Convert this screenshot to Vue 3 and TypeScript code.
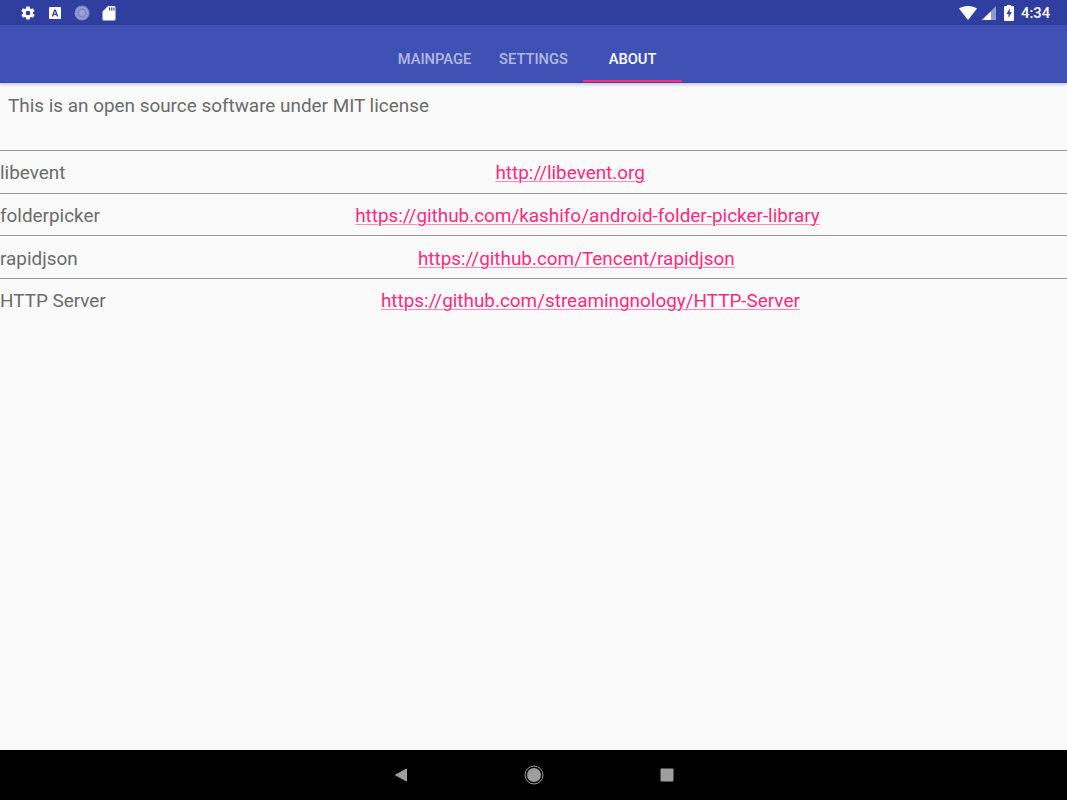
<template>
  <div class="screen">
    <div class="status-bar">
      <div class="status-left">
        <svg width="16" height="16" viewBox="0 0 24 24"><path fill="#fff" d="M19.4 13c.1-.3.1-.7.1-1s0-.7-.1-1l2.100-1.600c.2-.2.2-.4.1-.6l-2-3.500c-.1-.2-.4-.3-.6-.2l-2.500 1c-.5-.4-1.100-.7-1.700-1l-.4-2.600c0-.2-.2-.4-.5-.4h-4c-.2 0-.5.2-.5.400l-.4 2.600c-.6.300-1.200.6-1.700 1l-2.500-1c-.2-.1-.5 0-.6.200l-2 3.500c-.1.200-.1.500.1.600L4.500 11c0 .3-.1.700-.1 1s0 .7.1 1l-2.100 1.600c-.2.200-.2.400-.1.600l2 3.500c.1.200.4.300.6.200l2.500-1c.5.400 1.100.7 1.700 1l.4 2.600c0 .2.300.4.500.4h4c.3 0 .5-.2.500-.4l.4-2.600c.6-.3 1.200-.6 1.700-1l2.500 1c.2.100.5 0 .6-.2l2-3.500c.1-.2.100-.4-.1-.6zM12 15.500a3.500 3.500 0 1 1 0-7 3.500 3.500 0 0 1 0 7z"/></svg>
        <svg width="14" height="14" viewBox="0 0 14 14"><path fill="#fff" d="M2 1h10a1 1 0 0 1 1 1v10a1 1 0 0 1-1 1H2a1 1 0 0 1-1-1V2a1 1 0 0 1 1-1z"/><path fill="#303f9f" d="M6.200 3.500h1.600L10.300 10.500H8.800l-.5-1.500H5.700l-.5 1.500H3.700zM6.100 7.800h1.800L7 5.200z"/></svg>
        <svg width="16" height="16" viewBox="0 0 16 16"><circle cx="8" cy="8" r="7.500" fill="#7f8aca"/><circle cx="8" cy="8" r="5.500" fill="none" stroke="#a9b1dd" stroke-width="1.500" stroke-dasharray="1 1"/><circle cx="8" cy="8" r="3" fill="#99a2d6"/></svg>
        <svg width="14" height="16" viewBox="0 0 14 16"><path fill="#fff" d="M6 1h6a1.500 1.500 0 0 1 1.500 1.500v11.500a1.500 1.500 0 0 1-1.500 1.500H2A1.500 1.500 0 0 1 .5 14V6.500z"/><path fill="#303f9f" d="M7 2.500h1.200v3H7zM9.200 2.500h1.200v3H9.200zM11.400 2.500h1.100v3h-1.100z"/></svg>
      </div>
      <div class="status-right">
        <svg width="18" height="14" viewBox="0 0 18 14"><path fill="#fff" d="M0 2.600C2.400.9 5.600 0 9 0s6.600.9 9 2.600L9 14z"/></svg>
        <svg width="14" height="14" viewBox="0 0 14 14"><path fill="#8f9ad0" d="M14 0v14H0z"/><path fill="#fff" d="M9 5.500V14H0z"/></svg>
        <svg class="battery" width="10" height="16" viewBox="0 0 10 16"><path fill="#fff" d="M3 1V0h4v1h2a1 1 0 0 1 1 1v13a1 1 0 0 1-1 1H1a1 1 0 0 1-1-1V2a1 1 0 0 1 1-1z"/><path fill="#303f9f" d="M5.800 3 2.500 9h2v4l3.200-6h-2z"/></svg>
        <span class="clock">4:34</span>
      </div>
    </div>

    <header class="toolbar">
      <div class="tabs">
        <div v-for="tab in tabs" :key="tab" class="tab" :class="{ active: tab === 'About' }">{{ tab }}</div>
      </div>
    </header>

    <main class="content">
      <p class="intro">This is an open source software under MIT license</p>
      <div v-for="lib in libs" :key="lib.name" class="row">
        <span class="name">{{ lib.name }}</span>
        <span class="link-cell"><a class="link">{{ lib.url }}</a></span>
      </div>
    </main>

    <nav class="nav-bar">
      <svg width="14" height="14" viewBox="0 0 14 14"><path fill="#9e9e9e" stroke="#9e9e9e" stroke-width="1" stroke-linejoin="round" d="M12.500 1v12L1.500 7z"/></svg>
      <svg width="20" height="20" viewBox="0 0 20 20"><circle cx="10" cy="10" r="9" fill="none" stroke="#9e9e9e" stroke-width="1"/><circle cx="10" cy="10" r="7" fill="#9e9e9e"/></svg>
      <svg width="14" height="14" viewBox="0 0 14 14"><rect width="13" height="13" x=".5" y=".5" rx="1" fill="#9e9e9e"/></svg>
    </nav>
  </div>
</template>

<script setup lang="ts">
const tabs = ['Mainpage', 'Settings', 'About']

const libs = [
  { name: 'libevent', url: 'http://libevent.org' },
  { name: 'folderpicker', url: 'https://github.com/kashifo/android-folder-picker-library' },
  { name: 'rapidjson', url: 'https://github.com/Tencent/rapidjson' },
  { name: 'HTTP Server', url: 'https://github.com/streamingnology/HTTP-Server' },
]
</script>

<style>
html,
body {
  margin: 0;
  background: #fafafa;
}
</style>

<style scoped>
.screen {
  display: flex;
  flex-direction: column;
  height: 800px;
  font-family: Roboto, sans-serif;
  background: #fafafa;
  overflow: hidden;
}

.status-bar {
  display: flex;
  justify-content: space-between;
  align-items: center;
  height: 25px;
  flex: none;
  background: #303f9f;
}

.status-left {
  display: flex;
  align-items: center;
  gap: 12px;
  padding-left: 20px;
}

.status-right {
  display: flex;
  align-items: center;
  gap: 5px;
  padding-right: 17px;
}

.battery {
  margin-left: 3px;
}

.clock {
  color: #fff;
  font-size: 14.7px;
  font-weight: 500;
  margin-left: 2px;
}

.toolbar {
  flex: none;
  display: flex;
  justify-content: center;
  height: 58px;
  background: #3f51b5;
  border-bottom: 1px solid #2f48c4;
  box-sizing: border-box;
  box-shadow: 0 2px 3px rgba(0, 0, 0, 0.18);
}

.tabs {
  display: flex;
}

.tab {
  display: flex;
  align-items: center;
  justify-content: center;
  width: 99px;
  padding-top: 10px;
  box-sizing: border-box;
  color: rgba(255, 255, 255, 0.6);
  font-size: 14.7px;
  font-weight: 500;
  text-transform: uppercase;
}

.tab.active {
  color: #fff;
  box-shadow: inset 0 -2px 0 #ff2d7e;
}

.content {
  flex: 1;
  color: #6b6b6b;
  font-size: 18.9px;
}

.intro {
  height: 67px;
  margin: 0;
  padding: 12px 0 0 8px;
  box-sizing: border-box;
  line-height: 21px;
}

.row {
  display: flex;
  align-items: center;
  height: 42.67px;
  padding-top: 2px;
  box-sizing: border-box;
  border-top: 1px solid #999;
}

.name {
  padding-right: 8px;
}

.link-cell {
  flex: 1;
  text-align: center;
}

.link {
  color: #ff2a7f;
  text-decoration: underline;
  text-decoration-thickness: 1px;
  text-underline-offset: 2px;
  text-decoration-color: #ff8ab2;
}

.nav-bar {
  flex: none;
  display: flex;
  align-items: center;
  height: 50px;
  justify-content: center;
  gap: 116px;
  background: #000;
}
</style>
